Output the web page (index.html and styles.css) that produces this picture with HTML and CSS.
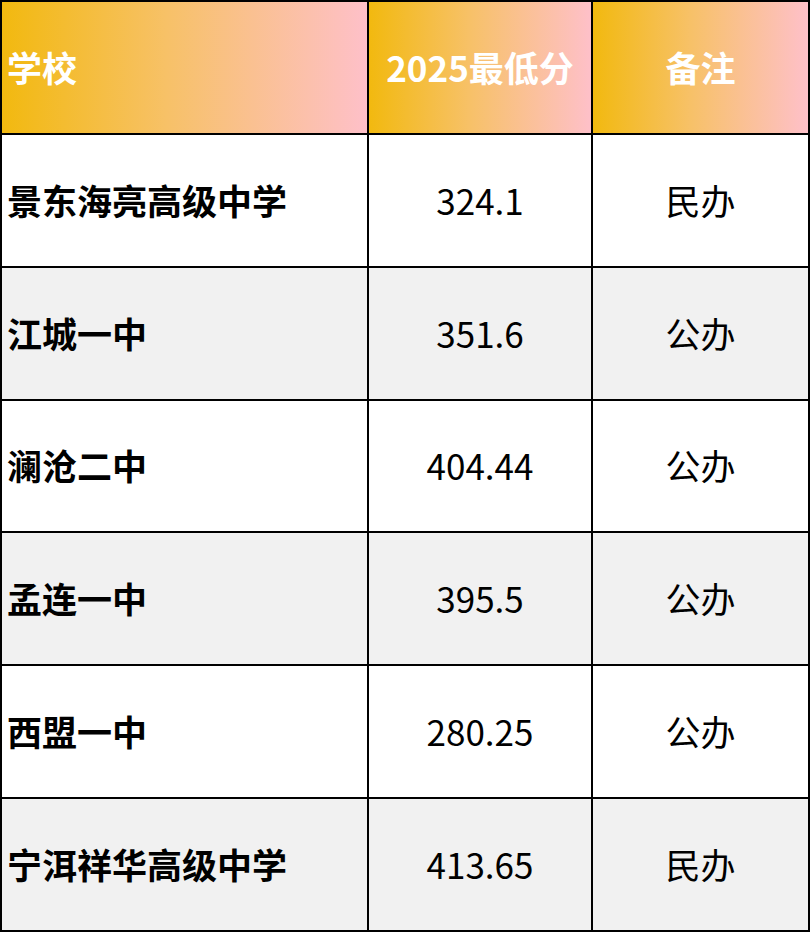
FILE: index.html
```html
<!DOCTYPE html>
<html lang="zh-CN">
<head>
<meta charset="utf-8">
<title>2025最低分</title>
<link rel="stylesheet" href="styles.css">
</head>
<body>
<div class="table">
  <div class="cell head school">学校</div>
  <div class="cell head">2025最低分</div>
  <div class="cell head">备注</div>

  <div class="cell school">景东海亮高级中学</div>
  <div class="cell">324.1</div>
  <div class="cell">民办</div>

  <div class="cell school alt">江城一中</div>
  <div class="cell alt">351.6</div>
  <div class="cell alt">公办</div>

  <div class="cell school">澜沧二中</div>
  <div class="cell">404.44</div>
  <div class="cell">公办</div>

  <div class="cell school alt">孟连一中</div>
  <div class="cell alt">395.5</div>
  <div class="cell alt">公办</div>

  <div class="cell school">西盟一中</div>
  <div class="cell">280.25</div>
  <div class="cell">公办</div>

  <div class="cell school alt">宁洱祥华高级中学</div>
  <div class="cell alt">413.65</div>
  <div class="cell alt">民办</div>
</div>
</body>
</html>
```
FILE: styles.css
```css
html, body {
  margin: 0;
  padding: 0;
  background: #ffffff;
}

body {
  font-family: "Noto Sans CJK SC", "Noto Sans", sans-serif;
}

.table {
  box-sizing: border-box;
  width: 810px;
  height: 932px;
  display: grid;
  grid-template-columns: 365px 222px 1fr;
  grid-template-rows: repeat(7, 1fr);
  gap: 2px;
  padding: 2px;
  background: #000000;
}

.cell {
  display: flex;
  align-items: center;
  justify-content: center;
  background: #ffffff;
  color: #000000;
  font-size: 35px;
  font-weight: 400;
  line-height: 1;
  padding-bottom: 2px;
}

.cell.alt {
  background: #f1f1f1;
}

.cell.school {
  justify-content: flex-start;
  padding-left: 5px;
  font-weight: 700;
}

.cell.head {
  background: linear-gradient(to right, #f2b90f, #f7c167 45%, #fec0c9);
  color: #ffffff;
  font-weight: 700;
}
```
